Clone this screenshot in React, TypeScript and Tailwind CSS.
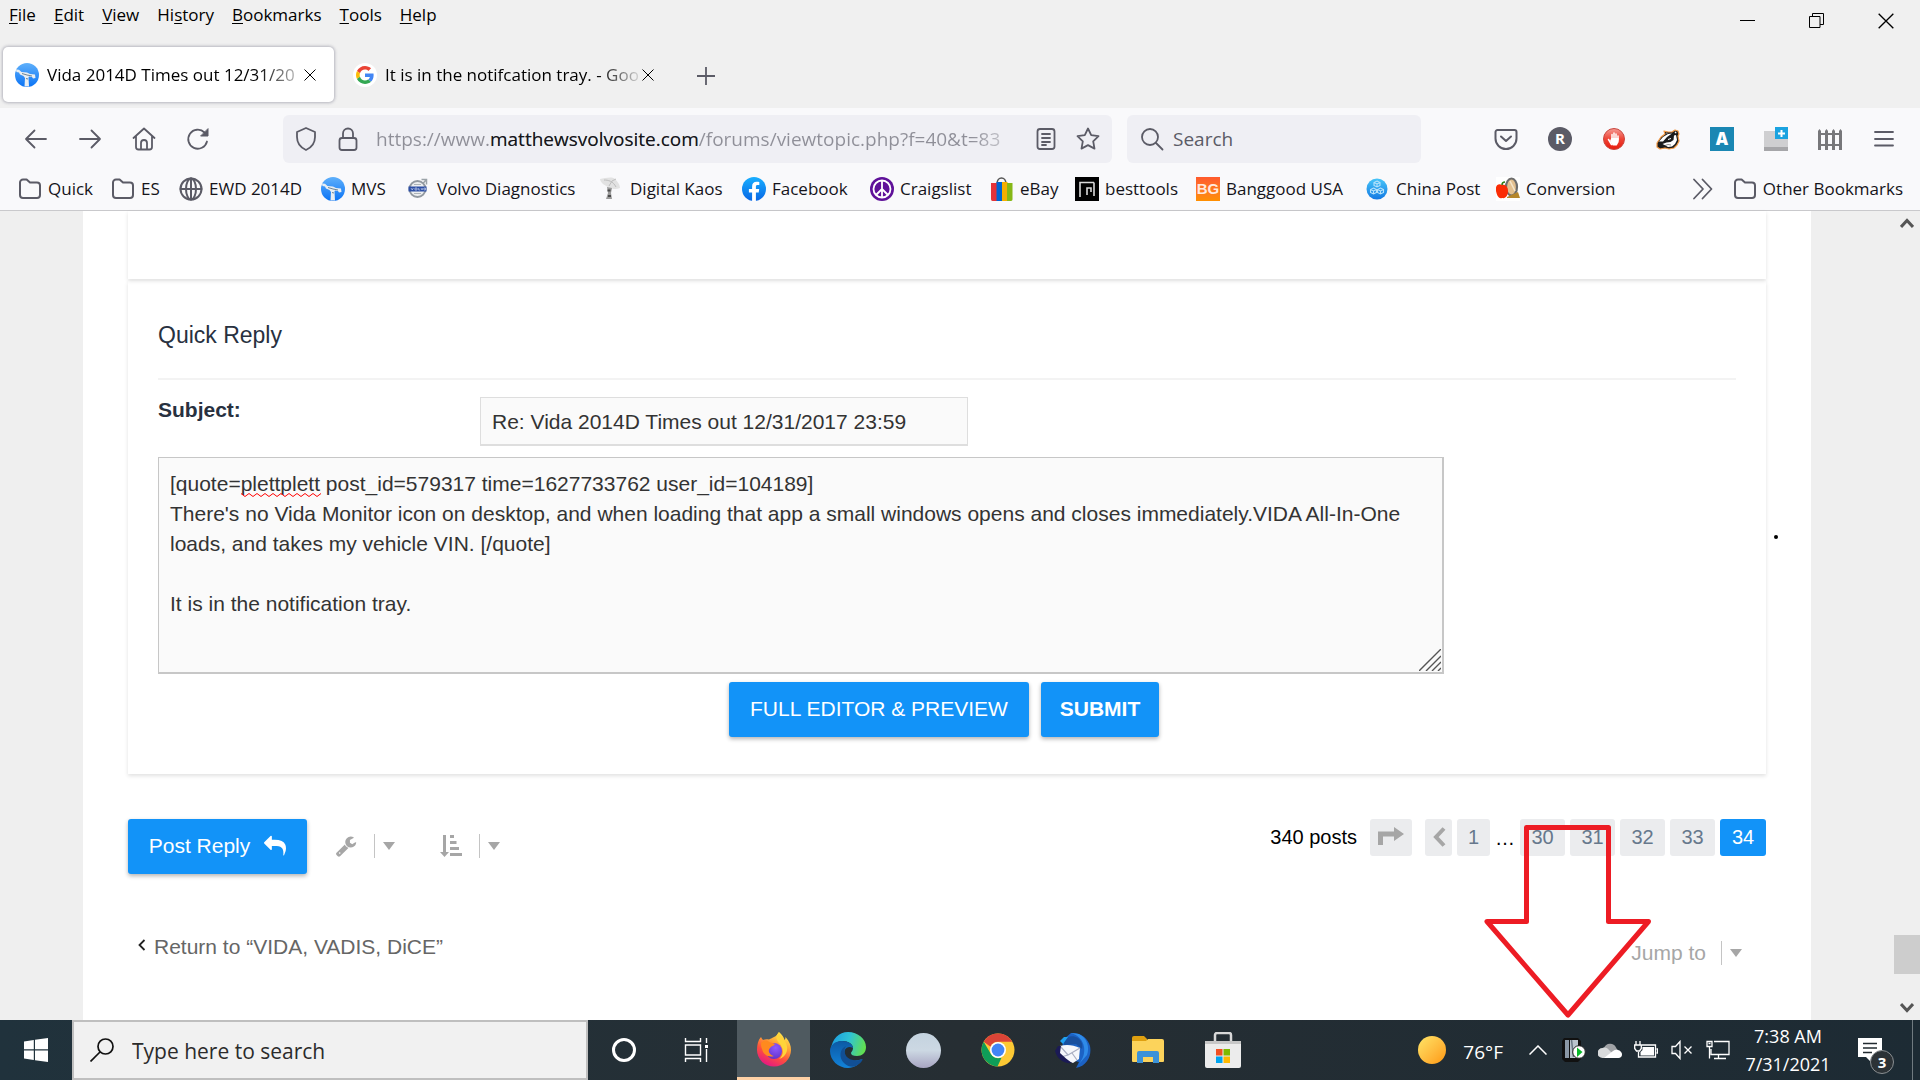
import React from "react";

const UI = "font-['Open_Sans','Noto_Sans',sans-serif]";
const SITE = "font-['Liberation_Sans',Arial,sans-serif]";

/* ---------- Browser icons ---------- */

type IconProps = { className?: string };

function Stroke({ className = "size-6", children, w = 1.5 }: IconProps & { children: React.ReactNode; w?: number }) {
  return (
    <svg viewBox="0 0 24 24" className={className} fill="none" stroke="currentColor" strokeWidth={w} strokeLinecap="round" strokeLinejoin="round" aria-hidden="true">
      {children}
    </svg>
  );
}

const Folder = () => (
  <Stroke w={2}>
    <path d="M2 5.500a3 3 0 0 1 3-3h3.600l3.400 3h7a3 3 0 0 1 3 3V18a3 3 0 0 1-3 3H5a3 3 0 0 1-3-3z" />
  </Stroke>
);

const Globe = () => (
  <Stroke w={2}>
    <circle cx="12" cy="12" r="10.500" />
    <ellipse cx="12" cy="12" rx="5" ry="10.500" />
    <path d="M1.500 12h21M12 1.500v21" />
  </Stroke>
);

function Volvosite() {
  return (
    <svg viewBox="0 0 24 24" className="size-6 shrink-0" aria-hidden="true">
      <defs>
        <linearGradient id="mvs" x1="0" y1="0" x2="0" y2="1">
          <stop offset="0" stopColor="#5fb0fb" />
          <stop offset="1" stopColor="#0a73f5" />
        </linearGradient>
      </defs>
      <circle cx="12" cy="12" r="12" fill="url(#mvs)" />
      <path d="M1 6.500l3 .3L6.500 9l5.500.500 3 1.500 5 .500.500 3.500-2.500.500-1-1.500-3-.500-.500 1L14 23.500H9.500L10 15l-1.500-2-3.500-1.500-1-2-2.500-.500z" fill="#e9eef2" />
      <path d="M7 10.500l5 1.500 5 1M11 15.500l2 .500" stroke="#6f8594" fill="none" />
    </svg>
  );
}

function VolvoBadge() {
  return (
    <svg viewBox="0 0 24 24" className="size-6 shrink-0" aria-hidden="true">
      <path d="M14.500 2.500h5v5M19 3l-3.500 4" stroke="#9ba3a8" strokeWidth="1.500" fill="none" />
      <circle cx="10.500" cy="12" r="8" fill="#eceeef" stroke="#9299a0" strokeWidth="2" />
      <path d="M7 7.500h7M7 16.500h7" stroke="#adb3b8" strokeWidth="1" />
      <rect x="1.500" y="9.500" width="18" height="5" fill="#2d4fa5" />
      <path d="M4 11l1.200 2 1.200-2M8 11h2v2H8zM11.700 11v2h1.500M14 11l1 2 1-2M17 11h1.500v2H17z" stroke="#dce4f7" strokeWidth=".6" fill="none" />
    </svg>
  );
}

function Dish() {
  return (
    <svg viewBox="0 0 24 24" className="size-6 shrink-0" aria-hidden="true">
      <path d="M0 2C5 1 12-1 15 2s5 6 5 9c-4 2-8 1-12-1S0 5 0 2z" fill="#e2e2e2" />
      <path d="M4 3c4 0 9 1 12 7M9 9l3-5 4-2" stroke="#bdbdbd" fill="none" />
      <path d="M7 10l5 1-1 5 1 6H6l2-6z" fill="#9a9a9a" />
      <path d="M7.500 13.500h3M8 19h3" stroke="#4b4b4b" strokeWidth="2" />
    </svg>
  );
}

function Facebook() {
  return (
    <svg viewBox="0 0 24 24" className="size-6 shrink-0" aria-hidden="true">
      <defs>
        <linearGradient id="fb" x1="0" y1="0" x2="0" y2="1">
          <stop offset="0" stopColor="#19afff" />
          <stop offset="1" stopColor="#0866e5" />
        </linearGradient>
      </defs>
      <circle cx="12" cy="12" r="12" fill="url(#fb)" />
      <path d="M16.700 15.400l.5-3.400h-3.300V9.800c0-1 .4-1.700 1.800-1.700h1.600V5c-.8-.1-1.800-.2-2.700-.2-2.800 0-4.500 1.600-4.500 4.600V12H6.900v3.400h3.200V24h3.800v-8.600z" fill="#fff" />
    </svg>
  );
}

function Peace() {
  return (
    <svg viewBox="0 0 24 24" className="size-6 shrink-0" aria-hidden="true">
      <circle cx="12" cy="12" r="12" fill="#5f1199" />
      <circle cx="12" cy="12" r="8.500" fill="none" stroke="#fff" strokeWidth="1.800" />
      <path d="M12 3.500v17M12 12l-6 6M12 12l6 6" stroke="#fff" strokeWidth="1.800" />
    </svg>
  );
}

function EbayBag() {
  return (
    <svg viewBox="0 0 24 24" className="size-6 shrink-0" aria-hidden="true">
      <path d="M7 7c0-8 9-8 9 0" stroke="#555" strokeWidth="1.600" fill="none" />
      <path d="M1 6h6v18H2.500C1.500 24 1 23 1 22z" fill="#e53238" />
      <path d="M6.500 5h5.500v19H6.500z" fill="#0064d2" />
      <path d="M12 5h5.500v19H12z" fill="#f5af02" />
      <path d="M17 6h5.500v16c0 1-.5 2-1.500 2h-4z" fill="#86b817" />
    </svg>
  );
}

function BestTools() {
  return (
    <svg viewBox="0 0 24 24" className="size-6 shrink-0" aria-hidden="true">
      <path d="M0 0h24v24H0z" />
      <path d="M5 20V5.500h14M19 5.500V19M12 18v-7h4v4" stroke="#d9d9d9" strokeWidth="1.600" fill="none" />
    </svg>
  );
}

function Banggood() {
  return (
    <span className="flex size-6 shrink-0 items-center justify-center bg-linear-to-b from-[#ff5a2d] to-[#ff8f00] font-['Liberation_Sans',sans-serif] text-[15px] leading-none font-bold text-[#ffe9df]">
      BG
    </span>
  );
}

function ChinaPost() {
  return (
    <svg viewBox="0 0 24 24" className="size-6 shrink-0" aria-hidden="true">
      <defs>
        <linearGradient id="cp" x1="0" y1="0" x2="0" y2="1">
          <stop offset="0" stopColor="#47c5f8" />
          <stop offset="1" stopColor="#1379e3" />
        </linearGradient>
      </defs>
      <circle cx="11" cy="12" r="10.500" fill="url(#cp)" />
      <g fill="none" stroke="#b6e2fb" strokeWidth="1.100">
        <path d="M11 4l3 1.500v3L11 10 8 8.500v-3zM8 5.500L11 7l3-1.500M11 7v3" />
        <path d="M7.500 11l3 1.500v3l-3 1.500-3-1.500v-3zM4.500 12.500l3 1.500 3-1.500M7.500 14v3" />
        <path d="M14.500 11l3 1.500v3l-3 1.500-3-1.500v-3zM11.500 12.500l3 1.500 3-1.500M14.500 14v3" />
      </g>
    </svg>
  );
}

function Conversion() {
  return (
    <svg viewBox="0 0 24 24" className="size-6 shrink-0" aria-hidden="true">
      <path d="M0 0h24v24H0z" fill="#fff" />
      <ellipse cx="15.500" cy="10" rx="5.500" ry="8.500" fill="#e3c08f" stroke="#6d6d6d" strokeWidth="2.200" />
      <path d="M11 20l11-5 2 6H11z" fill="#b5862b" />
      <path d="M14 4l5 10" stroke="#f6e6cb" strokeWidth="1.500" />
      <path d="M6 8c-4-2-7 1-6 6s3 8 6 7c4 1 6-3 6-7s-3-7-6-6z" fill="#fa2c05" />
      <path d="M6 8c0-2 1-3 3-3" stroke="#2c7a12" strokeWidth="1.500" fill="none" />
    </svg>
  );
}

function GoogleG() {
  return (
    <span className="flex size-6 shrink-0 items-center justify-center rounded-full bg-white">
      <svg viewBox="0 0 48 48" className="size-[18px]" aria-hidden="true">
        <path fill="#EA4335" d="M24 9.500c3.540 0 6.710 1.220 9.210 3.600l6.850-6.850C35.900 2.380 30.470 0 24 0 14.620 0 6.510 5.380 2.560 13.220l7.980 6.190C12.430 13.720 17.740 9.500 24 9.500z" />
        <path fill="#4285F4" d="M46.980 24.550c0-1.570-.15-3.090-.38-4.550H24v9.020h12.940c-.58 2.960-2.260 5.480-4.780 7.180l7.730 6c4.510-4.180 7.090-10.360 7.090-17.650z" />
        <path fill="#FBBC05" d="M10.530 28.590c-.48-1.450-.76-2.990-.76-4.590s.27-3.140.76-4.590l-7.980-6.190C.92 16.460 0 20.120 0 24c0 3.880.92 7.540 2.560 10.780l7.970-6.190z" />
        <path fill="#34A853" d="M24 48c6.480 0 11.930-2.130 15.890-5.810l-7.730-6c-2.150 1.450-4.920 2.300-8.160 2.300-6.260 0-11.570-4.220-13.470-9.910l-7.980 6.190C6.510 42.620 14.620 48 24 48z" />
      </svg>
    </span>
  );
}

const Cross = ({ className = "size-3" }: IconProps) => (
  <svg viewBox="0 0 12 12" className={className} stroke="currentColor" strokeWidth="1" fill="none" aria-hidden="true">
    <path d="M.5.5l11 11M11.500.5L.5 11.500" />
  </svg>
);

function BlockHand() {
  return (
    <svg viewBox="0 0 24 24" className="size-6" aria-hidden="true">
      <defs>
        <linearGradient id="hand" x1="0" y1="0" x2="0" y2="1">
          <stop offset="0" stopColor="#f59a93" />
          <stop offset=".5" stopColor="#ee4436" />
          <stop offset="1" stopColor="#e81a0c" />
        </linearGradient>
      </defs>
      <circle cx="12" cy="12" r="10.500" fill="url(#hand)" stroke="#c9473f" />
      <path d="M9.500 17.500L6.500 12.500M10 12V7.500M12 12V6M14 12V7M16 13V9" stroke="#fff" strokeWidth="1.500" strokeLinecap="round" />
      <path d="M9.300 11h7.400v4l-2 3.500h-4L8 14z" fill="#fff" />
    </svg>
  );
}

function Badger() {
  return (
    <svg viewBox="0 0 24 24" className="size-6" aria-hidden="true">
      <path d="M1 16l4-6 4-3-1-3 4 1 4 0 3-2 3 1 1 3-1 2 1 5-2 4-3 3-5 1-4-1-5 1-3-2z" fill="#1b1b1b" stroke="#f39a45" strokeWidth="1.200" strokeLinejoin="round" />
      <path d="M3 14.500l4-4.500 5-3 4-.5-5 3.500-4 4.500z" fill="#fff" />
      <path d="M6.500 17l4-1.500 4-.5 3-2 .5-4.500 2-.5 1 5-2 4-3 2.500-4 .5-2.500-1.500z" fill="#fff" />
      <path d="M18.500 5l1.500-.5.500 1.500-1 .5zM10 5.500l1.500.5-.5 1z" fill="#fff" />
      <path d="M12 12.500l3-1" stroke="#fff" strokeWidth="1" />
      <path d="M9 18.500l3-1 3 .5" stroke="#555" strokeWidth=".7" fill="none" />
    </svg>
  );
}

/* ---------- Browser chrome ---------- */

const menus = ["File", "Edit", "View", "History", "Bookmarks", "Tools", "Help"];
const accessKey: Record<string, number> = { History: 2 };

function MenuBar() {
  return (
    <header className="flex h-[47px] items-start justify-between">
      <nav className="flex gap-[18px] pt-1 pl-[9px] text-[17px] leading-[22px]">
        {menus.map((m) => {
          const k = accessKey[m] ?? 0;
          return (
            <button key={m} type="button">
              {m.slice(0, k)}
              <span className="underline underline-offset-2">{m[k]}</span>
              {m.slice(k + 1)}
            </button>
          );
        })}
      </nav>
      <div className="flex">
        <button type="button" aria-label="Minimize" className="flex h-[41px] w-[69px] items-center justify-center">
          <span className="h-px w-[15px] bg-black" />
        </button>
        <button type="button" aria-label="Restore" className="flex h-[41px] w-[69px] items-center justify-center">
          <svg viewBox="0 0 15 15" className="size-[15px]" fill="none" stroke="#000" aria-hidden="true">
            <path d="M.5 3.500h10.500v11H.5zM3.500 3.500v-3h11v11h-3.500" />
          </svg>
        </button>
        <button type="button" aria-label="Close" className="flex h-[41px] w-[69px] items-center justify-center">
          <Cross className="size-4" />
        </button>
      </div>
    </header>
  );
}

function TabStrip() {
  return (
    <div className="flex h-[61px] items-start pl-[3px]">
      <div className="flex h-[55px] w-[331px] items-center rounded-[5px] bg-white pr-[18px] pl-3 shadow-[0_0_3px_1px_rgba(110,110,130,0.45)]">
        <Volvosite />
        <span className="ml-2 min-w-0 flex-1 bg-linear-to-r from-black from-80% to-[#d0d0d0] bg-clip-text text-[17px] whitespace-nowrap text-transparent">
          Vida 2014D Times out 12/31/20
        </span>
        <button type="button" aria-label="Close tab" className="ml-1">
          <Cross />
        </button>
      </div>
      <div className="flex h-[55px] w-[338px] items-center pr-[18px] pl-[19px]">
        <GoogleG />
        <span className="ml-2 min-w-0 flex-1 bg-linear-to-r from-black from-80% to-[#e8e8e8] bg-clip-text text-[17px] whitespace-nowrap text-transparent">
          It is in the notifcation tray. - Goo
        </span>
        <button type="button" aria-label="Close tab">
          <Cross />
        </button>
      </div>
      <button type="button" aria-label="New tab" className="ml-[25px] flex h-[58px] items-center text-[#5b5b66]">
        <svg viewBox="0 0 18 18" className="size-[18px]" stroke="currentColor" strokeWidth="1.800" aria-hidden="true">
          <path d="M9 0v18M0 9h18" />
        </svg>
      </button>
    </div>
  );
}

function AddressBar() {
  return (
    <div className="flex h-[61px] items-center text-[#5b5b66]">
      <div className="flex w-[283px] shrink-0 items-center gap-[30px] pl-[24px]">
        <button type="button" aria-label="Back">
          <Stroke w={1.8}><path d="M22 12H2M10.500 3.500L2 12l8.500 8.500" /></Stroke>
        </button>
        <button type="button" aria-label="Forward">
          <Stroke w={1.8}><path d="M2 12h20M13.500 3.500L22 12l-8.500 8.500" /></Stroke>
        </button>
        <button type="button" aria-label="Home">
          <Stroke w={1.8}><path d="M1.500 11L12 1.500 22.500 11M4 9v11a2.500 2.500 0 0 0 2.500 2.500h11A2.500 2.500 0 0 0 20 20V9M9 22.500V16a3 3 0 0 1 6 0v6.500" /></Stroke>
        </button>
        <button type="button" aria-label="Reload">
          <Stroke w={1.8}><path d="M21 14.500A9.500 9.500 0 1 1 18.500 5.500" /><path d="M22 2v7h-7z" fill="currentColor" strokeWidth="1" /></Stroke>
        </button>
      </div>
      <div className="flex h-12 w-[829px] items-center rounded-md bg-[#efeff4] pr-3 pl-[11px]">
        <Stroke w={1.800}><path d="M12 1l9 4v5c0 6-3.500 10.500-9 13-5.500-2.500-9-7-9-13V5z" /></Stroke>
        <span className="ml-[18px]"><Stroke w={1.800}><rect x="3.500" y="11" width="17" height="12" rx="2.500" /><path d="M7 11V6.500a5 5 0 0 1 10 0V11" /></Stroke></span>
        <div role="textbox" aria-label="Address" tabIndex={0} className="ml-4 min-w-0 flex-1 bg-linear-to-r from-[#8f8f98] from-92% to-[#e4e4e9] bg-clip-text pt-0.5 text-[19px] whitespace-nowrap text-transparent">
          https://www.<span className="text-[#15141a]">matthewsvolvosite.com</span>/forums/viewtopic.php?f=40&amp;t=83
        </div>
        <button type="button" aria-label="Reader view" className="ml-3">
          <Stroke w={1.8}><rect x="3.500" y="2" width="17" height="20" rx="2.500" /><path d="M8 7h8M8 11h8M8 15h8M8 18h4" /></Stroke>
        </button>
        <button type="button" aria-label="Bookmark this page" className="ml-[18px]">
          <Stroke w={1.800}><path d="M12 1.500l3.200 6.700 7.300 1-5.300 5.100 1.300 7.300-6.500-3.500-6.500 3.500 1.300-7.300L1.500 9.200l7.300-1z" /></Stroke>
        </button>
      </div>
      <div className="ml-[15px] flex h-12 w-[294px] items-center rounded-md bg-[#efeff4] pl-[13px]">
        <Stroke w={1.800}><circle cx="10" cy="10" r="8" /><path d="M16 16l6.500 6.500" /></Stroke>
        <input aria-label="Search" placeholder="Search" className="ml-[9px] w-[200px] bg-transparent pt-0.5 text-[19px] outline-none placeholder:text-[#5b5b66]" />
      </div>
      <div className="ml-auto flex items-center gap-[30px] pr-[24px]">
        <button type="button" aria-label="Pocket">
          <Stroke w={2}><path d="M3.500 3h17a2 2 0 0 1 2 2v6.500a10.500 10.500 0 0 1-21 0V5a2 2 0 0 1 2-2z" /><path d="M7 9.500l5 4.500 5-4.500" /></Stroke>
        </button>
        <button type="button" aria-label="Reader extension" className="flex size-6 items-center justify-center rounded-full bg-[#5b5b66] text-[15px] leading-none font-bold text-white">R</button>
        <button type="button" aria-label="Ad blocker"><BlockHand /></button>
        <button type="button" aria-label="Tracker blocker"><Badger /></button>
        <button type="button" aria-label="Extension A" className="flex size-6 items-center justify-center bg-[#1a87b3] text-[17px] leading-none font-extrabold text-white">A</button>
        <button type="button" aria-label="Add window">
          <svg viewBox="0 0 24 24" className="size-6" aria-hidden="true">
            <path d="M0 4h24v16H0z" fill="#cfcfd1" />
            <path d="M0 20h24v4H0z" fill="#a6a6a9" />
            <path d="M11 0h13v12H11z" fill="#1ba3e0" />
            <path d="M17.500 3v7M14 6.500h7" stroke="#fff" strokeWidth="2" />
          </svg>
        </button>
        <button type="button" aria-label="Fence">
          <svg viewBox="0 0 24 24" className="size-6" fill="#77777a" aria-hidden="true">
            <path d="M0 4l1.500-2L3 4v19H0zM7 4l1.500-2L10 4v19H7zM14 4l1.500-2L17 4v19h-3zM21 4l1.500-2L24 4v19h-3zM0 6h24v2H0zM0 17h24v2H0z" />
          </svg>
        </button>
        <button type="button" aria-label="Menu">
          <Stroke w={1.800}><path d="M3 5h18M3 12h18M3 18.500h18" /></Stroke>
        </button>
      </div>
    </div>
  );
}

const bookmarks = [
  { label: "Quick", icon: <Folder />, w: "w-[93px]" },
  { label: "ES", icon: <Folder />, w: "w-[68px]" },
  { label: "EWD 2014D", icon: <Globe />, w: "w-[142px]" },
  { label: "MVS", icon: <Volvosite />, w: "w-[86px]" },
  { label: "Volvo Diagnostics", icon: <VolvoBadge />, w: "w-[193px]" },
  { label: "Digital Kaos", icon: <Dish />, w: "w-[142px]" },
  { label: "Facebook", icon: <Facebook />, w: "w-[128px]" },
  { label: "Craigslist", icon: <Peace />, w: "w-[120px]" },
  { label: "eBay", icon: <EbayBag />, w: "w-[85px]" },
  { label: "besttools", icon: <BestTools />, w: "w-[121px]" },
  { label: "Banggood USA", icon: <Banggood />, w: "w-[170px]" },
  { label: "China Post", icon: <ChinaPost />, w: "w-[130px]" },
  { label: "Conversion", icon: <Conversion />, w: "w-[120px]" },
];

function BookmarksBar() {
  return (
    <nav aria-label="Bookmarks" className="flex h-[42px] items-center border-b border-[#c9c9cc] pb-0.5 pl-[18px] text-[17px] whitespace-nowrap text-[#15141a]">
      {bookmarks.map((b) => (
        <a key={b.label} href="#" className={`flex items-center gap-1.5 ${b.w}`}>
          <span className="shrink-0 text-[#5b5b66]">{b.icon}</span>
          {b.label}
        </a>
      ))}
      <button type="button" aria-label="More bookmarks" className="mr-5 ml-auto text-[#5b5b66]">
        <Stroke w={1.800}><path d="M5 2.500l9 9.500-9 9.500M13.500 2.500l9 9.500-9 9.500" /></Stroke>
      </button>
      <button type="button" className="flex items-center gap-1.5 pr-[17px]">
        <span className="text-[#5b5b66]"><Folder /></span>
        Other Bookmarks
      </button>
    </nav>
  );
}

/* ---------- Forum page ---------- */

const Caret = () => (
  <svg viewBox="0 0 12 8" className="h-2 w-3" fill="#a6a6a6" aria-hidden="true">
    <path d="M0 0h12L6 8z" />
  </svg>
);

const quote = `[quote=plettplett post_id=579317 time=1627733762 user_id=104189]
There's no Vida Monitor icon on desktop, and when loading that app a small windows opens and closes immediately.VIDA All-In-One loads, and takes my vehicle VIN. [/quote]

It is in the notification tray.`;

const cardShadow = "shadow-[0_2px_4px_rgba(0,0,0,0.12)]";
const blueButton = "flex h-[55px] items-center justify-center rounded-[3px] bg-[#1293f8] pb-0.5 text-[21px] text-white shadow-[0_2px_4px_rgba(0,0,0,0.3)]";

function QuickReply() {
  return (
    <form className={`mt-0.5 px-[30px] pt-9 pb-[37px] ${cardShadow}`} onSubmit={(e) => e.preventDefault()}>
      <h2 className="text-[23px] leading-9 text-[#28313f]">Quick Reply</h2>
      <hr className="mt-[25px] border-t-2 border-[#f3f3f3]" />
      <div className="mt-[17px] flex">
        <label htmlFor="subject" className="w-[322px] shrink-0 text-[21px] leading-[26px] font-bold text-[#28313f]">Subject:</label>
        <input
          id="subject"
          defaultValue="Re: Vida 2014D Times out 12/31/2017 23:59"
          className="h-[49px] w-[488px] border border-b-2 border-[#dedede] bg-[#fafafa] px-[11px] pt-0.5 text-[21px] text-[#333] outline-none"
        />
      </div>
      <div className="relative mt-[11px] w-[1286px] max-w-full">
        <textarea
          aria-label="Message"
          spellCheck={false}
          defaultValue={quote}
          className="block h-[217px] w-full resize-none overflow-hidden border border-r-2 border-b-2 border-[#c7c7c7] bg-[#fafafa] px-[11px] py-[11px] text-[21px] leading-[30px] text-[#333] outline-none"
        />
        <svg viewBox="0 0 80 4" className="absolute top-[36px] left-[83px] h-1 w-20" fill="none" stroke="#f00" aria-hidden="true">
          <path d="M0 .5l4 3 4-3 4 3 4-3 4 3 4-3 4 3 4-3 4 3 4-3 4 3 4-3 4 3 4-3 4 3 4-3 4 3 4-3 4 3 4-3" />
        </svg>
        <svg viewBox="0 0 22 22" className="absolute right-[3px] bottom-[3px] size-[22px]" stroke="#555" strokeWidth="1.400" aria-hidden="true">
          <path d="M0 22L22 0M7 22L22 7M13 22l9-9M19 22l3-3" />
        </svg>
      </div>
      <div className="mt-2 flex justify-center gap-3 pr-[6px]">
        <button type="button" className={`${blueButton} w-[300px]`}>FULL EDITOR &amp; PREVIEW</button>
        <button type="submit" className={`${blueButton} w-[118px] font-bold`}>SUBMIT</button>
      </div>
    </form>
  );
}

const pageBtn = "flex h-[37px] items-center justify-center rounded-[3px] bg-[#ebecee] pb-0.5 text-[#66788c]";

function ActionBar() {
  return (
    <div className="mt-[45px] flex items-start">
      <button type="button" className={`${blueButton} w-[179px] gap-[14px]`}>
        Post Reply
        <svg viewBox="0 0 1792 1792" className="size-[22px] -scale-x-100" fill="#fff" aria-hidden="true">
          <path d="M1792 640q0 26-19 45l-512 512q-19 19-45 19t-45-19-19-45v-256h-224q-98 0-175.500 6t-154 21.500-133 42.500-105.500 69.500-80 101-48.500 138.500-17.500 181q0 55 5 123 0 6 2.500 23.500t2.500 26.500q0 15-8.500 25t-23.500 10q-16 0-28-17-7-9-13-22t-13.500-30-10.500-24q-127-285-127-451 0-199 53-333 162-403 875-403h224v-256q0-26 19-45t45-19 45 19l512 512q19 19 19 45z" />
        </svg>
      </button>
      <button type="button" aria-label="Topic tools" className="ml-[28px] flex h-[54px] items-center">
        <svg viewBox="0 0 1792 1792" className="size-[22px]" fill="#a6a6a6" aria-hidden="true">
          <path d="M448 1472q0-26-19-45t-45-19-45 19-19 45 19 45 45 19 45-19 19-45zm644-420l-682 682q-37 37-90 37-52 0-91-37l-106-108q-38-36-38-90 0-53 38-91l681-681q39 98 114.500 173.500t173.500 114.500zm634-435q0 39-23 106-47 134-164.500 217.500t-258.500 83.500q-185 0-316.500-131.500t-131.500-316.500 131.500-316.500 316.500-131.500q58 0 121.500 16.500t107.500 46.500q16 11 16 28t-16 28l-293 169v224l193 107q5-3 79-48.500t135.500-81 70.500-35.500q15 0 23.500 10t8.500 25z" />
        </svg>
        <span className="mr-2 ml-[17px] h-6 w-px bg-[#c4c4c4]" />
        <Caret />
      </button>
      <button type="button" aria-label="Sort options" className="ml-[45px] flex h-[54px] items-center">
        <svg viewBox="0 0 22 22" className="size-[22px]" fill="#a6a6a6" aria-hidden="true">
          <path d="M3 0h3v17h3l-4.500 5L0 17h3zM10 0h4v3h-4zM10 6h6.500v3H10zM10 12h9v3h-9zM10 18h12v3H10z" />
        </svg>
        <span className="mr-2 ml-[17px] h-6 w-px bg-[#c4c4c4]" />
        <Caret />
      </button>
      <nav aria-label="Pages" className="ml-auto flex items-center gap-[5px] text-[20px]">
        <span className="mr-2 pb-0.5 text-black">340 posts</span>
        <button type="button" aria-label="Jump to page" className={`${pageBtn} mr-2 w-[42px]`}>
          <svg viewBox="0 0 26 20" className="h-5 w-[26px]" fill="#a6a6a6" aria-hidden="true">
            <path d="M0 18V4.500h16V0l10 7-10 7V9.500H5V18z" />
          </svg>
        </button>
        <a href="#" aria-label="Previous" className={`${pageBtn} w-[27px]`}>
          <svg viewBox="0 0 14 20" className="h-5 w-3.5" fill="none" stroke="#a6a6a6" strokeWidth="4" aria-hidden="true">
            <path d="M12 1.500L4 10l8 8.500" />
          </svg>
        </a>
        <a href="#" className={`${pageBtn} w-[33px]`}>1</a>
        <span className="flex w-5 justify-center text-black">…</span>
        <a href="#" className={`${pageBtn} w-[45px]`}>30</a>
        <a href="#" className={`${pageBtn} w-[45px]`}>31</a>
        <a href="#" className={`${pageBtn} w-[45px]`}>32</a>
        <a href="#" className={`${pageBtn} w-[45px]`}>33</a>
        <a href="#" aria-current="page" className="flex h-[37px] w-[46px] items-center justify-center rounded-[3px] bg-[#1293f8] pb-0.5 text-white">34</a>
      </nav>
    </div>
  );
}

function ForumPage() {
  return (
    <main className={`relative flex flex-1 bg-[#efefef] ${SITE}`}>
      <div className="ml-[83px] flex-1 bg-white px-[45px]">
        <div className={`h-[68px] ${cardShadow}`} />
        <QuickReply />
        <ActionBar />
        <div className="mt-[51px] flex items-center justify-between text-[21px]">
          <a href="#" className="flex items-center gap-2 pl-2.5 text-[#666]">
            <svg viewBox="0 0 8 12" className="mb-1 h-3 w-2" fill="none" stroke="#222" strokeWidth="1.800" aria-hidden="true">
              <path d="M6.500 1L1.500 6l5 5" />
            </svg>
            Return to “VIDA, VADIS, DiCE”
          </a>
          <button type="button" className="mt-3 mr-6 flex items-center text-[#a6a6a6]">
            Jump to
            <span className="mr-2 ml-[15px] h-6 w-px bg-[#c4c4c4]" />
            <Caret />
          </button>
        </div>
      </div>
      <div className="w-[83px]" />
      <div className="flex w-[26px] flex-col items-center bg-[#efefef]" aria-hidden="true">
        <svg viewBox="0 0 14 10" className="mt-[7px] h-2.5 w-3.5" fill="none" stroke="#555" strokeWidth="3"><path d="M1 9l6-6.500L13 9" /></svg>
        <div className="flex-1" />
        <div className="h-[39px] w-full bg-[#cdcdcd]" />
        <svg viewBox="0 0 14 10" className="mt-[29px] mb-[7px] h-2.5 w-3.5" fill="none" stroke="#555" strokeWidth="3"><path d="M1 1l6 6.500L13 1" /></svg>
      </div>
      {/* Hand-drawn annotations over the page */}
      <span className="absolute top-[324px] right-[142px] size-1 rounded-full bg-black" />
      <svg viewBox="0 0 171 198" className="absolute right-[267px] bottom-0 h-[198px] w-[171px]" fill="none" stroke="#ed1c24" strokeWidth="5" aria-hidden="true">
        <path d="M44.500 5.500h82v94h40L86 193 5 99.500h39.500z" strokeLinejoin="round" />
      </svg>
    </main>
  );
}

/* ---------- Taskbar ---------- */

function FirefoxLogo() {
  return (
    <svg viewBox="0 0 36 36" className="size-9" aria-hidden="true">
      <defs>
        <linearGradient id="fx" x1=".8" y1="0" x2=".3" y2="1">
          <stop offset="0" stopColor="#fff44f" />
          <stop offset=".35" stopColor="#ffa436" />
          <stop offset=".65" stopColor="#ff4f3d" />
          <stop offset="1" stopColor="#e31587" />
        </linearGradient>
        <radialGradient id="fxp" cx=".6" cy=".3" r=".8">
          <stop offset="0" stopColor="#9059ff" />
          <stop offset="1" stopColor="#5b2fc4" />
        </radialGradient>
      </defs>
      <path d="M23 1c3 3 5 5 5.500 8 1-1 1-2 1-3 4 4 5.500 9 5.500 13a17 16.500 0 0 1-34 0C1 14 2 9 5 6c.5 1 1 2 2 3 2-1 4-1 6-.5C15 7 21 6 23 1z" fill="url(#fx)" />
      <circle cx="18" cy="20" r="8" fill="url(#fxp)" />
      <path d="M5 12c3-3 6-3 8-1 2 1 5 1 6 2-1 2-4 2-5 4-3 3 0 7 4 8-6 2-11-2-12-7-1-2-1-4-1-6z" fill="#ff8a1f" />
      <path d="M23 1c-4 4-3 8 1 12 4 5 4 11-1 15 8-2 11-12 5-19-2-3-5-5-5-8z" fill="#ffd43a" />
    </svg>
  );
}

function EdgeLogo() {
  return (
    <svg viewBox="0 0 36 36" className="size-9" aria-hidden="true">
      <defs>
        <linearGradient id="ed1" x1="0" y1=".3" x2="1" y2=".5">
          <stop offset="0" stopColor="#1b9de2" />
          <stop offset=".5" stopColor="#2fc3d5" />
          <stop offset="1" stopColor="#63e04e" />
        </linearGradient>
        <linearGradient id="ed2" x1="0" y1="0" x2="0" y2="1">
          <stop offset="0" stopColor="#0c59a4" />
          <stop offset="1" stopColor="#1283da" />
        </linearGradient>
      </defs>
      <path d="M1 17C2 7 9 0 18 0c10 0 18 7 18 15 0 6-4 9-9 9-4 0-6-1-6-3 0-1 2-2 2-5 0-4-5-7-10-7-6 0-10 3-12 8z" fill="url(#ed1)" />
      <path d="M0 19c0-6 5-10 12-10 6 0 11 3 11 7-6-3-10 2-8 7 2 6 9 7 17 4-2 5-8 9-14 9C8 36 0 28 0 19z" fill="url(#ed2)" />
      <path d="M16 14c-7 3-7 12-2 17 3 3 8 5 12 3 3-2 6-4 7-7-7 3-14 1-17-3-2-4-2-7 0-10z" fill="#114f95" />
    </svg>
  );
}

function ChromeLogo() {
  return (
    <svg viewBox="0 0 34 34" className="size-[34px]" aria-hidden="true">
      <circle cx="17" cy="17" r="16.500" fill="#fcc934" />
      <path d="M17 .5A16.500 16.500 0 0 1 31.300 8.800H17a8.200 8.200 0 0 0-7.500 5L2.700 8.800A16.500 16.500 0 0 1 17 .5z" fill="#db4437" />
      <path d="M2.700 8.800l7.200 12.300c1.500 2.700 4.300 4.100 7.100 4.100l3.500-.5-4 8.800A16.500 16.500 0 0 1 2.700 8.800z" fill="#0f9d58" />
      <circle cx="17" cy="17" r="8" fill="#fff" />
      <circle cx="17" cy="17" r="6.400" fill="#4285f4" />
    </svg>
  );
}

function Thunderbird() {
  return (
    <svg viewBox="0 0 36 36" className="size-9" aria-hidden="true">
      <path d="M9 7L16 1c9-1 17 5 19 13 2 10-3 20-14 22l3-6-8-2L4 20l3-5z" fill="#1c62c4" />
      <path d="M16 1c7 2 12 7 13 14 1 6-1 12-5 17l8-9c3-8 0-17-8-21z" fill="#2f8be8" />
      <path d="M9 8c4-4 9-5 14-2 4 3 5 7 4 11l-6-5-12 1z" fill="#184f9e" />
      <path d="M5 14c7-2 13-1 20 2l-1 11-6 4C12 29 7 27 3 22z" fill="#f6f7fb" />
      <path d="M5 14l8 9 12-7M13 23l-7 2M17 21l5 7" stroke="#a9aec2" strokeWidth="1.200" fill="none" />
      <path d="M0 19l3-5 3 0-1 7c4 4 8 7 12 10C9 32 2 27 0 19z" fill="#1b1a55" />
      <path d="M5 9l4-4 4 0-5 7z" fill="#1fa0f0" />
    </svg>
  );
}

function Explorer() {
  return (
    <svg viewBox="0 0 32 28" className="h-7 w-8" aria-hidden="true">
      <path d="M0 2a2 2 0 0 1 2-2h10l3 3v3H0z" fill="#dfa010" />
      <path d="M0 5h14l2-2h14a2 2 0 0 1 2 2v20a1 1 0 0 1-1 1H1a1 1 0 0 1-1-1z" fill="#fcd35b" />
      <path d="M5 27V17a2 2 0 0 1 2-2h18a2 2 0 0 1 2 2v10h-6v-6H11v6z" fill="#3c92d8" />
    </svg>
  );
}

function Store() {
  return (
    <svg viewBox="0 0 36 36" className="size-9" aria-hidden="true">
      <path d="M10 11V3a2 2 0 0 1 2-2h12a2 2 0 0 1 2 2v8" stroke="#d8d8d8" strokeWidth="2.500" fill="none" />
      <path d="M0 9h36v25a2 2 0 0 1-2 2H2a2 2 0 0 1-2-2z" fill="#ececec" />
      <path d="M0 9h36v3H0z" fill="#c7c7c7" />
      <path d="M11 17h6.500v6.500H11z" fill="#f25022" />
      <path d="M18.500 17H25v6.500h-6.500z" fill="#7fba00" />
      <path d="M11 24.500h6.500V31H11z" fill="#00a4ef" />
      <path d="M18.500 24.500H25V31h-6.500z" fill="#ffb900" />
    </svg>
  );
}

const apps = [
  { name: "Firefox", icon: <FirefoxLogo />, active: true },
  { name: "Edge", icon: <EdgeLogo /> },
  { name: "Orb", icon: <span className="block size-[35px] rounded-full bg-linear-to-b from-[#c4d3df] via-[#ccd8e3] to-[#a8a5c2]" /> },
  { name: "Chrome", icon: <ChromeLogo /> },
  { name: "Thunderbird", icon: <Thunderbird /> },
  { name: "File Explorer", icon: <Explorer /> },
  { name: "Store", icon: <Store /> },
];

function Taskbar() {
  return (
    <footer className="flex h-[60px] items-center bg-linear-to-r from-[#20323c] via-[#262e33] to-[#1d2b34] text-white">
      <button type="button" aria-label="Start" className="flex h-full w-[72px] items-center justify-center">
        <svg viewBox="0 0 24 24" className="size-6" fill="#fff" aria-hidden="true">
          <path d="M0 3.400L9.800 2v9.300H0zM11 1.800L24 0v11.300H11zM0 12.500h9.800V22L0 20.600zM11 12.500h13V24l-13-1.800z" />
        </svg>
      </button>
      <div className="flex h-full w-[516px] items-center border-2 border-[#bfbfbf] bg-[#f1f1f1] pl-4 text-[#2b2b2b]">
        <svg viewBox="0 0 24 24" className="size-6" fill="none" stroke="#111" strokeWidth="1.700" aria-hidden="true">
          <circle cx="15.500" cy="8.500" r="7.500" />
          <path d="M10 14L.5 23.500" />
        </svg>
        <input aria-label="Type here to search" placeholder="Type here to search" className="ml-[18px] w-[300px] bg-transparent pt-1 text-[21px] outline-none placeholder:text-[#2b2b2b]" />
      </div>
      <button type="button" aria-label="Cortana" className="flex w-[71px] justify-center">
        <span className="size-6 rounded-full border-[3px] border-white" />
      </button>
      <button type="button" aria-label="Task view" className="mr-[3px] flex w-[75px] justify-center">
        <svg viewBox="0 0 26 24" className="h-6 w-[26px]" fill="none" stroke="#fff" strokeWidth="1.400" aria-hidden="true">
          <path d="M1.500 0v3.500h15V0M1.500 24v-3.500h15V24M1.500 7h15v10h-15zM22.500 0v5M22.500 11v13" />
          <path d="M21 7h3v3h-3z" fill="#fff" stroke="none" />
        </svg>
      </button>
      {apps.map((a) => (
        <button
          key={a.name}
          type="button"
          aria-label={a.name}
          className={
            a.active
              ? "flex h-full w-[73px] items-center justify-center border-b-[3px] border-[#ffd2a6] bg-[#4f5a60]"
              : "ml-px flex h-full w-[74px] items-center justify-center"
          }
        >
          {a.icon}
        </button>
      ))}
      <div className="ml-auto flex h-full items-center">
        <span className="size-7 rounded-full bg-linear-to-br from-[#ffe566] to-[#ff9800]" />
        <span className="ml-[17px] pt-1 text-[19px]">76°F</span>
        <button type="button" aria-label="Show hidden icons" className="ml-[26px]">
          <svg viewBox="0 0 18 10" className="h-2.5 w-[18px]" fill="none" stroke="#fff" strokeWidth="1.500" aria-hidden="true"><path d="M.5 9.500L9 1l8.500 8.500" /></svg>
        </button>
        <svg viewBox="0 0 24 24" className="ml-[15px] size-6" role="img" aria-label="Vida Monitor">
          <path d="M2 0h14l3 3v18l-3 3H3l-3-3V3z" fill="#111" />
          <path d="M3 2h4v18H3z" fill="#8b98a6" />
          <path d="M8 2h8v18H8z" fill="#b9c3cd" />
          <path d="M9.500 2l2 17" stroke="#677583" strokeWidth="1.500" />
          <circle cx="17" cy="14" r="6.300" fill="#fff" stroke="#222" />
          <path d="M15 9.500l5.500 4.500-5.500 5z" fill="#0ab82a" />
        </svg>
        <svg viewBox="0 0 24 16" className="ml-3 h-4 w-6" role="img" aria-label="OneDrive">
          <path d="M6 6a6.500 6.500 0 0 1 12-.5L21 11H4z" fill="#a0a3a6" />
          <path d="M4.500 6c3-1 5 0 6.500 2l8 8H4.500a5 5 0 0 1 0-10z" fill="#d8dadb" />
          <path d="M6 16l9-7c4-3 9 0 9 3.500 0 2-1.500 3.500-3.500 3.500z" fill="#fff" />
        </svg>
        <svg viewBox="0 0 24 18" className="ml-3 h-[18px] w-6" fill="none" stroke="#fff" strokeWidth="1.300" role="img" aria-label="Battery charging">
          <path d="M8 4h13.500v12H4.500v-5M2 0v4M6 0v4M.7 4h6.600v3.500L5.500 10h-3L.7 7.500zM22.500 8h1v4h-1" />
          <path d="M8.500 6H20v8.500H6.500V11l2-2z" fill="#fff" stroke="none" />
        </svg>
        <svg viewBox="0 0 22 20" className="ml-[13px] h-5 w-[22px]" fill="none" stroke="#fff" strokeWidth="1.300" role="img" aria-label="Muted">
          <path d="M1 6.500h3.500L9 1.500v17L4.500 13.500H1zM13.500 6.500l7 7M20.500 6.500l-7 7" />
        </svg>
        <svg viewBox="0 0 24 20" className="ml-[13px] h-5 w-6" fill="none" stroke="#fff" strokeWidth="1.300" role="img" aria-label="Network">
          <path d="M8 1.500h15v13H5V9M12.500 14.500v4M8 18.500h12M1 1.500h5v5H1zM3.500 6.500v12M2.500 3.500h2" />
        </svg>
        <div className="ml-[15px] flex w-[86px] flex-col items-center text-[18px] leading-[28px]">
          <span>7:38 AM</span>
          <span>7/31/2021</span>
        </div>
        <button type="button" aria-label="3 notifications" className="relative mt-[18px] mr-[18px] ml-[27px] h-9 w-9 self-start">
          <svg viewBox="0 0 36 36" className="size-9" aria-hidden="true">
            <path d="M0 0h24v19H15v7l-7-7H0z" fill="#fff" />
            <path d="M5 5.500h14M5 10h14M5 14.500h9" stroke="#222b30" strokeWidth="1.400" />
          </svg>
          <span className="absolute right-0 bottom-0 flex size-6 items-center justify-center rounded-full border border-[#8a8f92] bg-[#2c3236] text-[15px] leading-none font-bold">3</span>
        </button>
        <span className="mr-[7px] h-full w-px bg-[#707a80]" />
      </div>
    </footer>
  );
}

export default function App() {
  return (
    <div className={`flex min-h-screen flex-col bg-[#f0f0f0] text-black ${UI}`}>
      <MenuBar />
      <TabStrip />
      <div className="bg-[#f9f9fb]">
        <AddressBar />
        <BookmarksBar />
      </div>
      <ForumPage />
      <Taskbar />
    </div>
  );
}
